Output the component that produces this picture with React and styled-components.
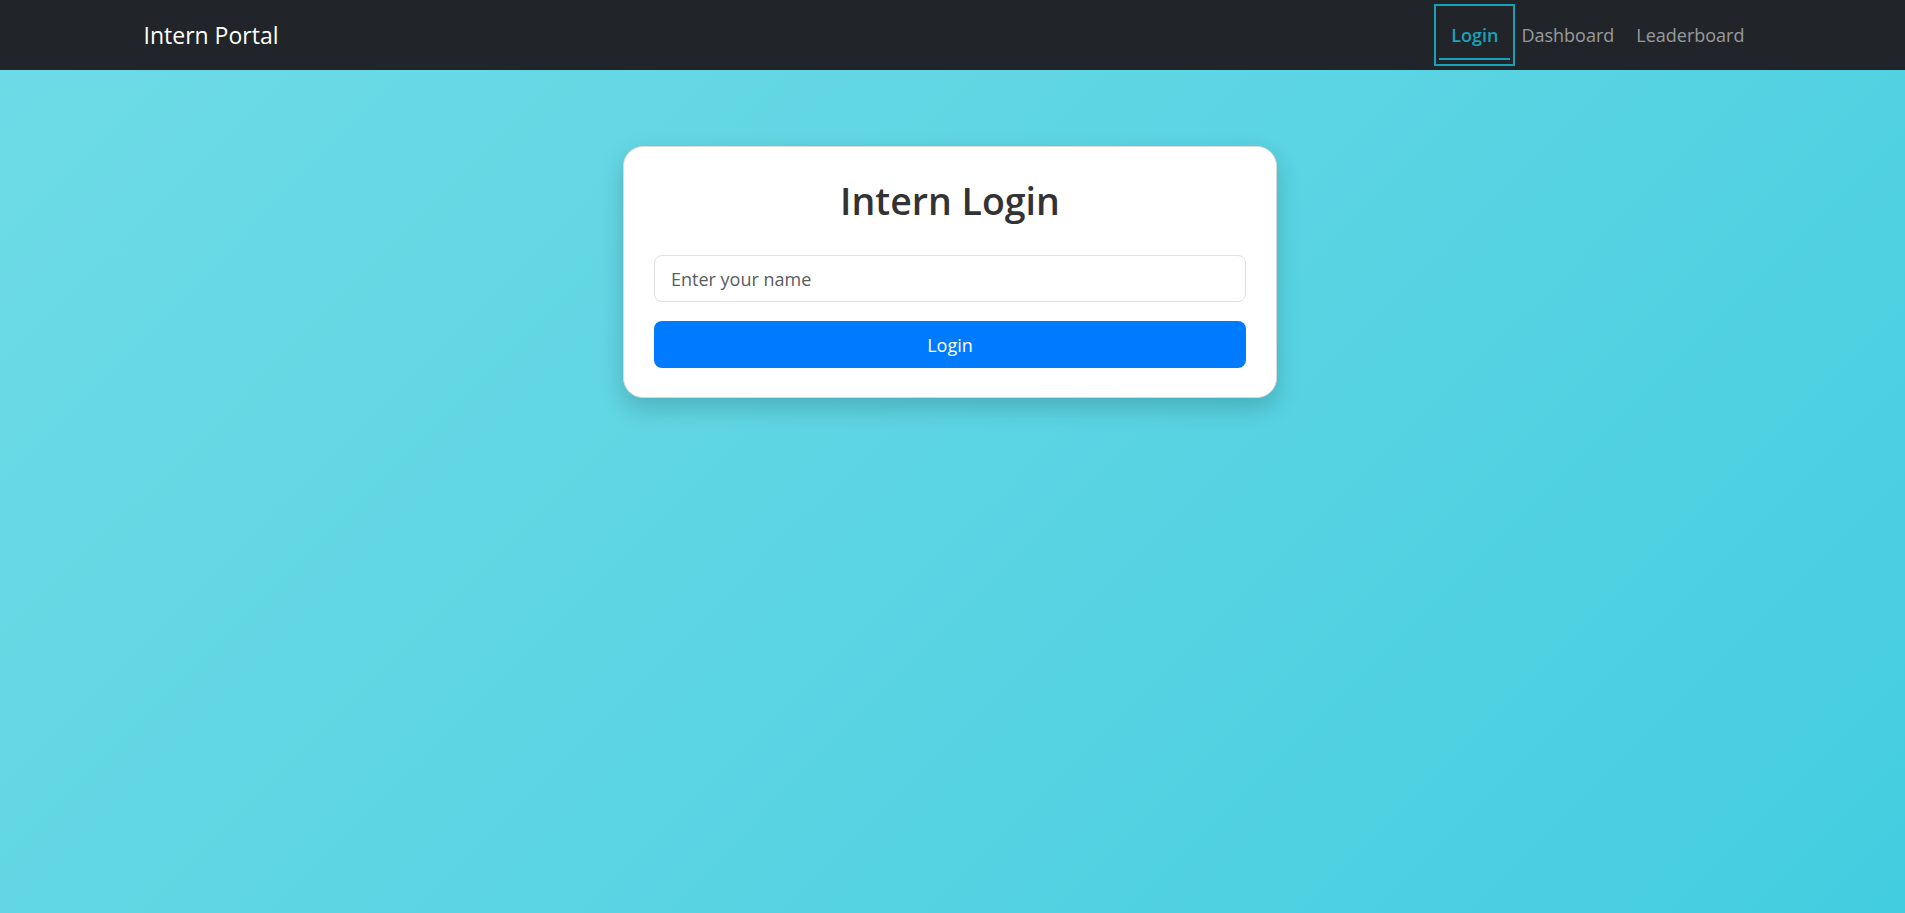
import React, { useState } from 'react';
import styled, { createGlobalStyle } from 'styled-components';

const GlobalStyle = createGlobalStyle`
  html, body {
    margin: 0;
    padding: 0;
  }
  body {
    font-family: "Open Sans", "Noto Sans", sans-serif;
    color: #212529;
  }
  * {
    box-sizing: border-box;
  }
`;

const App = () => {
  const [name, setName] = useState('');
  const links = [
    { id: 'login', label: 'Login', active: true },
    { id: 'dashboard', label: 'Dashboard' },
    { id: 'leaderboard', label: 'Leaderboard' }
  ];

  return (
    <>
      <GlobalStyle />
      <Navbar>
        <NavContainer>
          <Brand href="#">Intern Portal</Brand>
          <NavLinks>
            {links.map(link => (
              <NavLink key={link.id} href="#" $active={link.active}>
                {link.label}
              </NavLink>
            ))}
          </NavLinks>
        </NavContainer>
      </Navbar>
      <Main>
        <Card>
          <Title>Intern Login</Title>
          <Input
            type="text"
            placeholder="Enter your name"
            value={name}
            onChange={e => setName(e.target.value)}
          />
          <Button type="button">Login</Button>
        </Card>
      </Main>
    </>
  );
};

const Navbar = styled.nav`
  background: #212529;
  height: 70px;
  display: flex;
  align-items: center;
`;

const NavContainer = styled.div`
  width: 1650px;
  margin: 0 auto;
  padding: 0 15px;
  height: 100%;
  display: flex;
  align-items: center;
  justify-content: space-between;
`;

const Brand = styled.a`
  color: #fff;
  text-decoration: none;
  font-size: 23px;
  padding-left: 1px;
`;

const NavLinks = styled.div`
  display: flex;
  align-items: center;
  height: 100%;
  padding-right: 8px;
`;

const NavLink = styled.a`
  font-size: 18px;
  font-weight: ${p => (p.$active ? 600 : 400)};
  text-decoration: none;
  display: flex;
  align-items: center;
  color: ${p => (p.$active ? '#17a2b8' : 'rgba(255, 255, 255, 0.55)')};
  height: ${p => (p.$active ? '62px' : 'auto')};
  padding: ${p => (p.$active ? '0 15px' : '0 10px')};
  margin-right: ${p => (p.$active ? '-4px' : '0')};
  border: ${p => (p.$active ? '2px solid #17a2b8' : 'none')};
  position: relative;

  &:nth-child(3) {
    margin-left: 2px;
  }

  &::after {
    content: '';
    display: ${p => (p.$active ? 'block' : 'none')};
    position: absolute;
    left: 3px;
    right: 3px;
    bottom: 4px;
    height: 2px;
    background: #17a2b8;
  }
`;

const Main = styled.main`
  min-height: calc(100vh - 70px);
  background: linear-gradient(135deg, #6ddbe6 0%, #5bd4e3 50%, #43cde0 100%);
  padding-top: 76px;
  display: flex;
  justify-content: center;
  align-items: flex-start;
`;

const Card = styled.div`
  width: 654px;
  margin-right: 5px;
  background: #fff;
  border: 1px solid #d6dadd;
  border-radius: 20px;
  padding: 30px 30px 29px;
  box-shadow: 0 10px 25px rgba(0, 0, 0, 0.18);
  display: flex;
  flex-direction: column;
`;

const Title = styled.h2`
  margin: 0 0 30px;
  font-size: 37.5px;
  font-weight: 600;
  line-height: 48px;
  text-align: center;
  color: #333;
`;

const Input = styled.input`
  height: 47px;
  border: 1px solid #dee2e6;
  border-radius: 8px;
  padding: 0 16px;
  font-family: "Open Sans", "Noto Sans", sans-serif;
  font-size: 18px;
  color: #212529;
  outline: none;

  &::placeholder {
    color: #595c5f;
  }
`;

const Button = styled.button`
  margin-top: 19px;
  height: 47px;
  border: none;
  border-radius: 8px;
  background: #007bff;
  color: #fff;
  font-family: "Open Sans", "Noto Sans", sans-serif;
  font-size: 18px;
  cursor: pointer;
`;

export default App;
